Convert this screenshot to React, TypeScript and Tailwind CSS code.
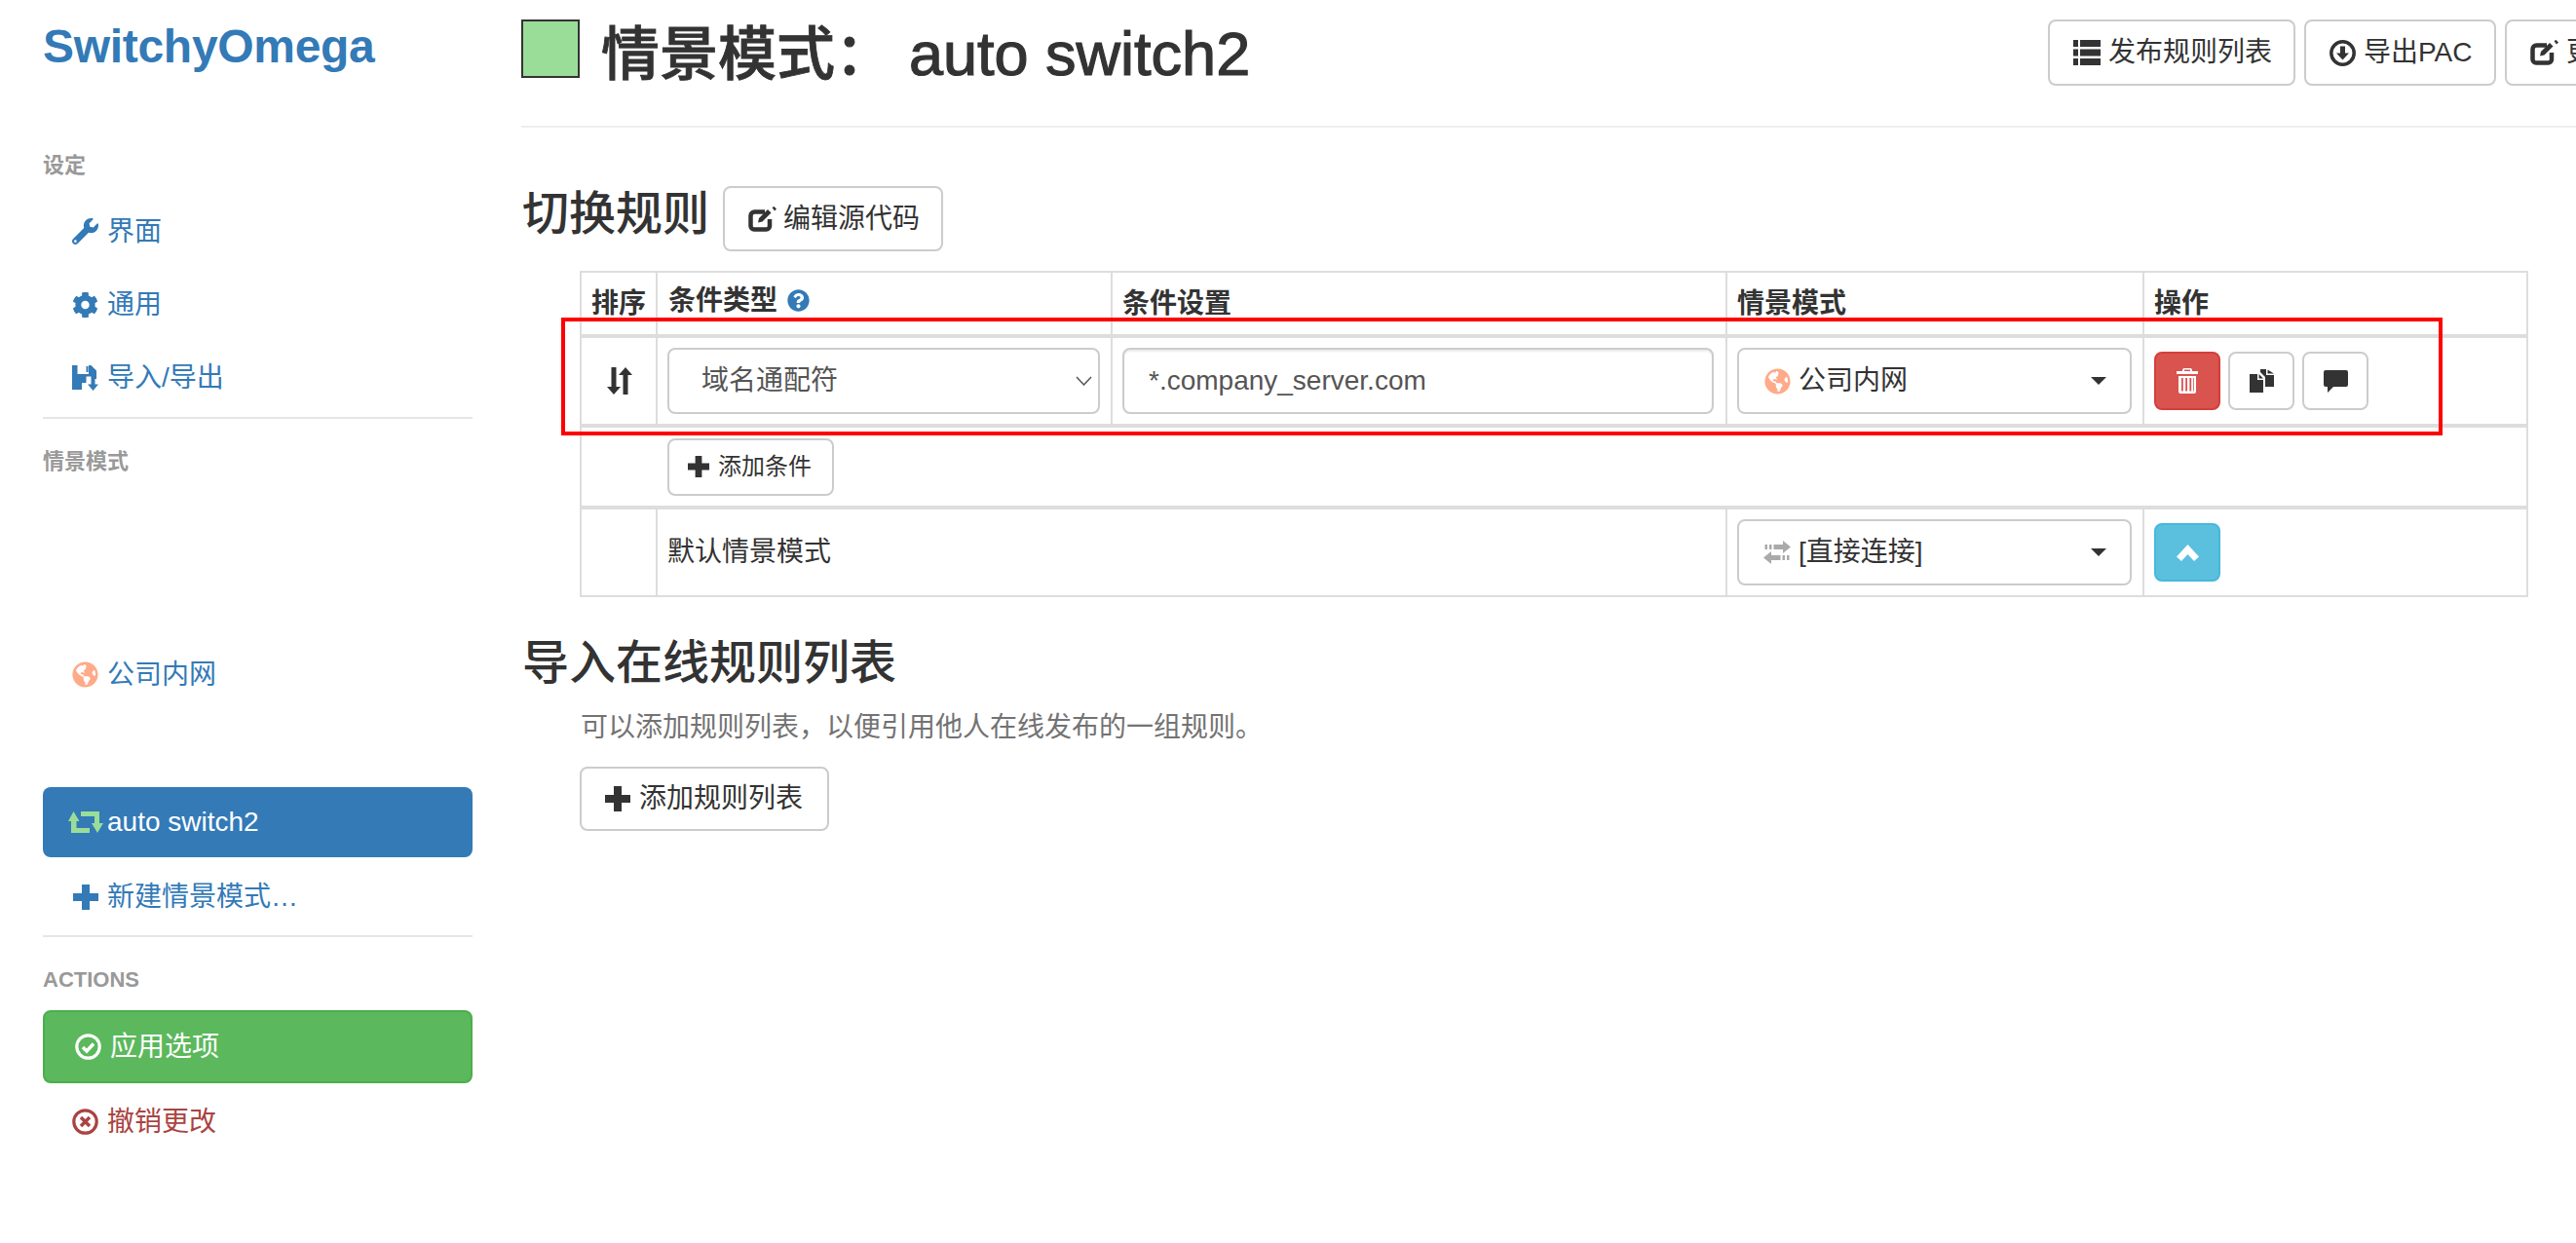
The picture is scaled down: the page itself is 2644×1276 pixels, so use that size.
import React from 'react';
import { FaWrench, FaCog, FaGlobeAmericas, FaQuestionCircle } from 'react-icons/fa';

// glyphicon look-alikes that the icon packages don't have
function PlusIcon({ size = 26 }: { size?: number }) {
  return (
    <svg width={size} height={size} viewBox="0 0 26 26" fill="currentColor" className="shrink-0">
      <path d="M9 0h8v9h9v8h-9v9H9v-9H0V9h9z" />
    </svg>
  );
}

function RetweetIcon() {
  return (
    <svg width="36" height="22" viewBox="0 0 36 22" fill="#99dd99" className="shrink-0">
      <path d="M5.500 0L11.500 10H8.500V17H22V22H3V10H0Z" />
      <path d="M13 0H32V12H36L30 22 24 12H27V5H13Z" />
    </svg>
  );
}

function FloppyIcon() {
  return (
    <svg width="27" height="26" viewBox="0 0 27 26" fill="currentColor" className="shrink-0">
      <path d="M0 0h5.500v9h11.500V0h2.500L25 5.500V14h-5.500v-2.500h-5V18H10v7H0zM14.500 1h2v6h-2z" fillRule="evenodd" />
      <path d="M19.500 14h4v5.500H27L21.500 26 16 19.500h3.500z" />
    </svg>
  );
}

function OkCircle() {
  return (
    <svg width="27" height="27" viewBox="0 0 27 27" fill="none" stroke="currentColor" className="shrink-0">
      <circle cx="13.500" cy="13.500" r="11.700" strokeWidth="3.200" />
      <path d="M8 14l4 4 7-7.500" strokeWidth="3.500" />
    </svg>
  );
}

function RemoveCircle() {
  return (
    <svg width="27" height="27" viewBox="0 0 27 27" fill="none" stroke="currentColor" className="shrink-0">
      <circle cx="13.500" cy="13.500" r="11.700" strokeWidth="3.200" />
      <path d="M9 9l9 9M18 9l-9 9" strokeWidth="3.500" />
    </svg>
  );
}

function EditIcon() {
  return (
    <svg width="29" height="26" viewBox="0 0 29 26" fill="none" stroke="currentColor" className="shrink-0">
      <path d="M17 5.500H6.500a4 4 0 0 0-4 4v10.500a3.500 3.500 0 0 0 3.500 3.500h12.500a3.500 3.500 0 0 0 3.500-3.500v-7" strokeWidth="4.500" />
      <path d="M10 16.500l1-4.500 9-9 3.500 3.500-9 9z" fill="currentColor" strokeWidth="0" />
      <path d="M24.500 1l2-1 2.500 2.500-2 2z" fill="currentColor" strokeWidth="0" />
    </svg>
  );
}

function ListIcon() {
  return (
    <svg width="28" height="26" viewBox="0 0 28 26" fill="currentColor" className="shrink-0">
      <path d="M0 0h5v7H0zM7 0h21v7H7zM0 9.500h5v7H0zM7 9.500h21v7H7zM0 19h5v7H0zM7 19h21v7H7z" />
    </svg>
  );
}

function DownloadIcon() {
  return (
    <svg width="27" height="27" viewBox="0 0 27 27" fill="none" stroke="currentColor" className="shrink-0">
      <circle cx="13.500" cy="13.500" r="11.700" strokeWidth="3.500" />
      <path d="M11 6.500h5v7h4l-6.500 7-6.500-7h4z" fill="currentColor" strokeWidth="0" />
    </svg>
  );
}

function SortIcon() {
  return (
    <svg width="27" height="28" viewBox="0 0 27 28" fill="currentColor">
      <path d="M5.500 0h5v20h4.500l-7 8-7-8h4.500z" />
      <path d="M17.500 28V8H13l7-8 7 8h-4.500v20z" />
    </svg>
  );
}

function TrashIcon() {
  return (
    <svg width="22" height="26" viewBox="0 0 22 26" fill="currentColor">
      <path d="M8 0h6a2 2 0 0 1 2 2v1h6v3H0V3h6V2a2 2 0 0 1 2-2zm0 1.500V3h6V1.500z" fillRule="evenodd" />
      <path
        d="M2 8h18v16a2 2 0 0 1-2 2H4a2 2 0 0 1-2-2zM5 10v13.500h1.800V10zM9.200 10v13.500H11V10zM13.400 10v13.500h1.800V10zM17 10v13.500h.800V10z"
        fillRule="evenodd"
      />
    </svg>
  );
}

function CopyIcon() {
  return (
    <svg width="25" height="24" viewBox="0 0 25 24" fill="currentColor">
      <path d="M0 5h8v6h6v13H0zM9.500 5l4.500 4.500H9.500z" />
      <path d="M11 0h6v6h8v12h-9V8l-5-5zM18.500 .500L25 4.500h-6.500z" />
    </svg>
  );
}

function CommentIcon() {
  return (
    <svg width="25" height="23" viewBox="0 0 25 23" fill="currentColor">
      <path d="M2 0h21a2 2 0 0 1 2 2v13a2 2 0 0 1-2 2H10l-6 6v-6H2a2 2 0 0 1-2-2V2a2 2 0 0 1 2-2z" />
    </svg>
  );
}

function TransferIcon() {
  return (
    <svg width="28" height="24" viewBox="0 0 28 24" fill="currentColor" className="shrink-0">
      <path d="M1.500 4h2.500v5H1.500zM6 4h2.500v5H6zM10.500 4H20V0l8 6.500-8 6.500V9h-9.500z" />
      <path d="M0 17.500L8 11v4h9.500v5H8v4zM19.500 15H22v5h-2.500zM24 15h2.500v5H24z" />
    </svg>
  );
}

function ChevronUpIcon() {
  return (
    <svg width="23" height="17" viewBox="0 0 23 17" fill="currentColor">
      <path d="M0 12.500L11.500 0 23 12.500 18 17l-6.500-7L5 17z" />
    </svg>
  );
}

function Caret() {
  return (
    <svg width="16" height="8" viewBox="0 0 16 8" fill="currentColor" className="shrink-0">
      <path d="M0 0h16L8 8z" />
    </svg>
  );
}

function NavItem({ icon, label }: { icon: React.ReactNode; label: string }) {
  return (
    <div className="h-[67px] pl-[30px] flex items-center text-[#337ab7]">
      <span className="w-[27px] mr-[9px] flex justify-center shrink-0">{icon}</span>
      {label}
    </div>
  );
}

function NavHeader({ children, className }: { children: React.ReactNode; className: string }) {
  return <div className={`h-[40px] leading-[40px] text-[22px] font-bold text-[#999] ${className}`}>{children}</div>;
}

function ToolButton({ icon, label, className }: { icon: React.ReactNode; label: string; className: string }) {
  return (
    <button className={`h-[68px] shrink-0 flex items-center border-2 border-[#ccc] rounded-[8px] bg-white text-[#333] ${className}`}>
      {icon}
      <span>{label}</span>
    </button>
  );
}

function ProfileSelect({ icon, label }: { icon: React.ReactNode; label: string }) {
  return (
    <div className="w-[405px] h-[68px] pl-[25px] pr-[24px] flex items-center border-2 border-[#ccc] rounded-[8px] bg-white text-[#333]">
      <span className="w-[28px] mr-[8px] flex justify-center shrink-0">{icon}</span>
      <span className="flex-1">{label}</span>
      <Caret />
    </div>
  );
}

function SquareButton({ children, className }: { children: React.ReactNode; className: string }) {
  return (
    <button className={`w-[68px] h-[60px] flex items-center justify-center border-2 rounded-[8px] ${className}`}>
      {children}
    </button>
  );
}

export default function App() {
  const thClass = 'border-r-2 border-t-2 border-b-4 border-[#ddd] px-[10px] text-left font-bold align-middle';
  const tdClass = 'border-r-2 border-[#ddd] px-[10px] align-middle';

  return (
    <div className="relative w-full h-[1276px] flex overflow-hidden bg-white text-[28px] text-[#333] [font-family:'Liberation_Sans','Noto_Sans_CJK_SC',sans-serif]">
      {/* sidebar */}
      <aside className="w-[535px] shrink-0 pl-[44px] pr-[50px]">
        <div className="h-[96px] flex items-center text-[48px] font-bold tracking-[-0.3px] text-[#337ab7]">SwitchyOmega</div>
        <NavHeader className="mt-[54px]">设定</NavHeader>
        <div className="mt-[14px] flex flex-col gap-[8px]">
          <NavItem icon={<FaWrench size={27} />} label="界面" />
          <NavItem icon={<FaCog size={28} />} label="通用" />
          <NavItem icon={<FloppyIcon />} label="导入/导出" />
        </div>
        <div className="mt-[7px] h-[2px] bg-[#e5e5e5]" />
        <NavHeader className="mt-[24px]">情景模式</NavHeader>
        <div className="mt-[165px]">
          <NavItem icon={<FaGlobeAmericas size={27} color="#ffaa88" />} label="公司内网" />
        </div>
        <div className="mt-[82px] h-[72px] pl-[26px] flex items-center rounded-[8px] bg-[#337ab7] text-white">
          <RetweetIcon />
          <span className="ml-[4px]">auto switch2</span>
        </div>
        <div className="mt-[7px]">
          <NavItem icon={<PlusIcon />} label="新建情景模式…" />
        </div>
        <div className="mt-[6px] h-[2px] bg-[#e5e5e5]" />
        <NavHeader className="mt-[24px]">ACTIONS</NavHeader>
        <div className="mt-[11px] h-[75px] pl-[31px] flex items-center rounded-[8px] border-2 border-[#4cae4c] bg-[#5cb85c] text-white">
          <OkCircle />
          <span className="ml-[9px]">应用选项</span>
        </div>
        <div className="mt-[6px] h-[67px] pl-[30px] flex items-center text-[#a94442]">
          <RemoveCircle />
          <span className="ml-[9px]">撤销更改</span>
        </div>
      </aside>

      {/* main */}
      <main className="flex-1 min-w-0 overflow-hidden">
        <div className="pt-[20px] flex">
          <div className="w-[1567px] shrink-0 flex items-start">
            <div className="w-[60px] h-[60px] border-2 border-[#333] bg-[#99dd99]" />
            <h1 className="ml-[22px] mt-[1px] text-[60px] font-medium leading-[68px] whitespace-nowrap [-webkit-text-stroke:0.8px]">
              情景模式：
              <span className="ml-[16px] text-[63px] [-webkit-text-stroke:1.2px]">auto switch2</span>
            </h1>
          </div>
          <div className="flex gap-[9px]">
            <ToolButton icon={<ListIcon />} label="发布规则列表" className="w-[254px] pl-[24px] gap-[8px]" />
            <ToolButton icon={<DownloadIcon />} label="导出PAC" className="w-[197px] pl-[24px] gap-[8px]" />
            <ToolButton icon={<EditIcon />} label="更改名称" className="w-[230px] pl-[24px] gap-[8px]" />
          </div>
        </div>
        <div className="mt-[38px] border-t-2 border-[#eee]" />

        <div className="mt-[60px] flex items-center gap-[14px]">
          <h2 className="ml-[1px] -mt-[10px] text-[48px] leading-[60px] font-medium">切换规则</h2>
          <ToolButton icon={<EditIcon />} label="编辑源代码" className="!h-[67px] w-[226px] pl-[24px] gap-[7px]" />
        </div>

        <table className="mt-[20px] ml-[60px] w-[2000px] table-fixed border-separate border-spacing-0">
          <colgroup>
            <col className="w-[80px]" />
            <col className="w-[467px]" />
            <col className="w-[631px]" />
            <col className="w-[428px]" />
            <col className="w-[394px]" />
          </colgroup>
          <thead>
            <tr className="h-[69px]">
              <th className={`${thClass} border-l-2`}>排序</th>
              <th className={thClass}>
                <span className="flex items-center pl-[1px] -mt-[6px]">
                  条件类型
                  <FaQuestionCircle size={23} color="#337ab7" className="ml-[10px]" />
                </span>
              </th>
              <th className={thClass}>条件设置</th>
              <th className={thClass}>情景模式</th>
              <th className={thClass}>操作</th>
            </tr>
          </thead>
          <tbody>
            <tr className="h-[92px]">
              <td className={`${tdClass} border-l-2 border-b-4 text-center`}>
                <span className="flex justify-center">
                  <SortIcon />
                </span>
              </td>
              <td className={`${tdClass} border-b-4`}>
                <div className="w-[444px] h-[68px] pl-[33px] pr-[6px] flex items-center justify-between border-2 border-[#ccc] rounded-[8px] text-[#555]">
                  域名通配符
                  <svg width="17" height="10" viewBox="0 0 17 10" fill="none" stroke="#555" strokeWidth="1.500">
                    <path d="M1 1l7.500 8L16 1" />
                  </svg>
                </div>
              </td>
              <td className={`${tdClass} border-b-4`}>
                <input
                  readOnly
                  value="*.company_server.com"
                  className="w-[607px] h-[68px] px-[25px] border-2 border-[#ccc] rounded-[8px] text-[#555] outline-none shadow-[inset_0_2px_2px_rgba(0,0,0,0.075)]"
                />
              </td>
              <td className={`${tdClass} border-b-4`}>
                <ProfileSelect icon={<FaGlobeAmericas size={27} color="#ffaa88" />} label="公司内网" />
              </td>
              <td className={`${tdClass} border-b-4`}>
                <div className="flex gap-[8px]">
                  <SquareButton className="bg-[#d9534f] border-[#d43f3a] text-white">
                    <TrashIcon />
                  </SquareButton>
                  <SquareButton className="bg-white border-[#ccc] text-[#333]">
                    <CopyIcon />
                  </SquareButton>
                  <SquareButton className="bg-white border-[#ccc] text-[#333]">
                    <CommentIcon />
                  </SquareButton>
                </div>
              </td>
            </tr>
            <tr className="h-[84px]">
              <td colSpan={5} className="border-x-2 border-b-4 border-[#ddd] pl-[88px] align-middle">
                <button className="w-[171px] h-[59px] pl-[19px] flex items-center gap-[9px] border-2 border-[#ccc] rounded-[8px] text-[24px] text-[#333]">
                  <PlusIcon size={22} />
                  添加条件
                </button>
              </td>
            </tr>
            <tr className="h-[90px]">
              <td className={`${tdClass} border-l-2 border-b-2`} />
              <td colSpan={2} className={`${tdClass} border-b-2`}>默认情景模式</td>
              <td className={`${tdClass} border-b-2`}>
                <ProfileSelect icon={<span className="text-[#aaa]"><TransferIcon /></span>} label="[直接连接]" />
              </td>
              <td className={`${tdClass} border-b-2`}>
                <SquareButton className="bg-[#5bc0de] border-[#46b8da] text-white">
                  <ChevronUpIcon />
                </SquareButton>
              </td>
            </tr>
          </tbody>
        </table>

        <h2 className="mt-[38px] ml-[1px] text-[48px] leading-[60px] font-medium">导入在线规则列表</h2>
        <p className="mt-[16px] ml-[61px] leading-[40px] text-[#737373]">可以添加规则列表，以便引用他人在线发布的一组规则。</p>
        <button className="mt-[20px] ml-[60px] w-[256px] h-[66px] pl-[24px] flex items-center gap-[9px] border-2 border-[#ccc] rounded-[8px] text-[#333]">
          <PlusIcon />
          添加规则列表
        </button>
      </main>

      {/* red annotation box from the screenshot */}
      <div className="absolute left-[576px] top-[326px] w-[1931px] h-[121px] border-4 border-[#f00] pointer-events-none" />
    </div>
  );
}
